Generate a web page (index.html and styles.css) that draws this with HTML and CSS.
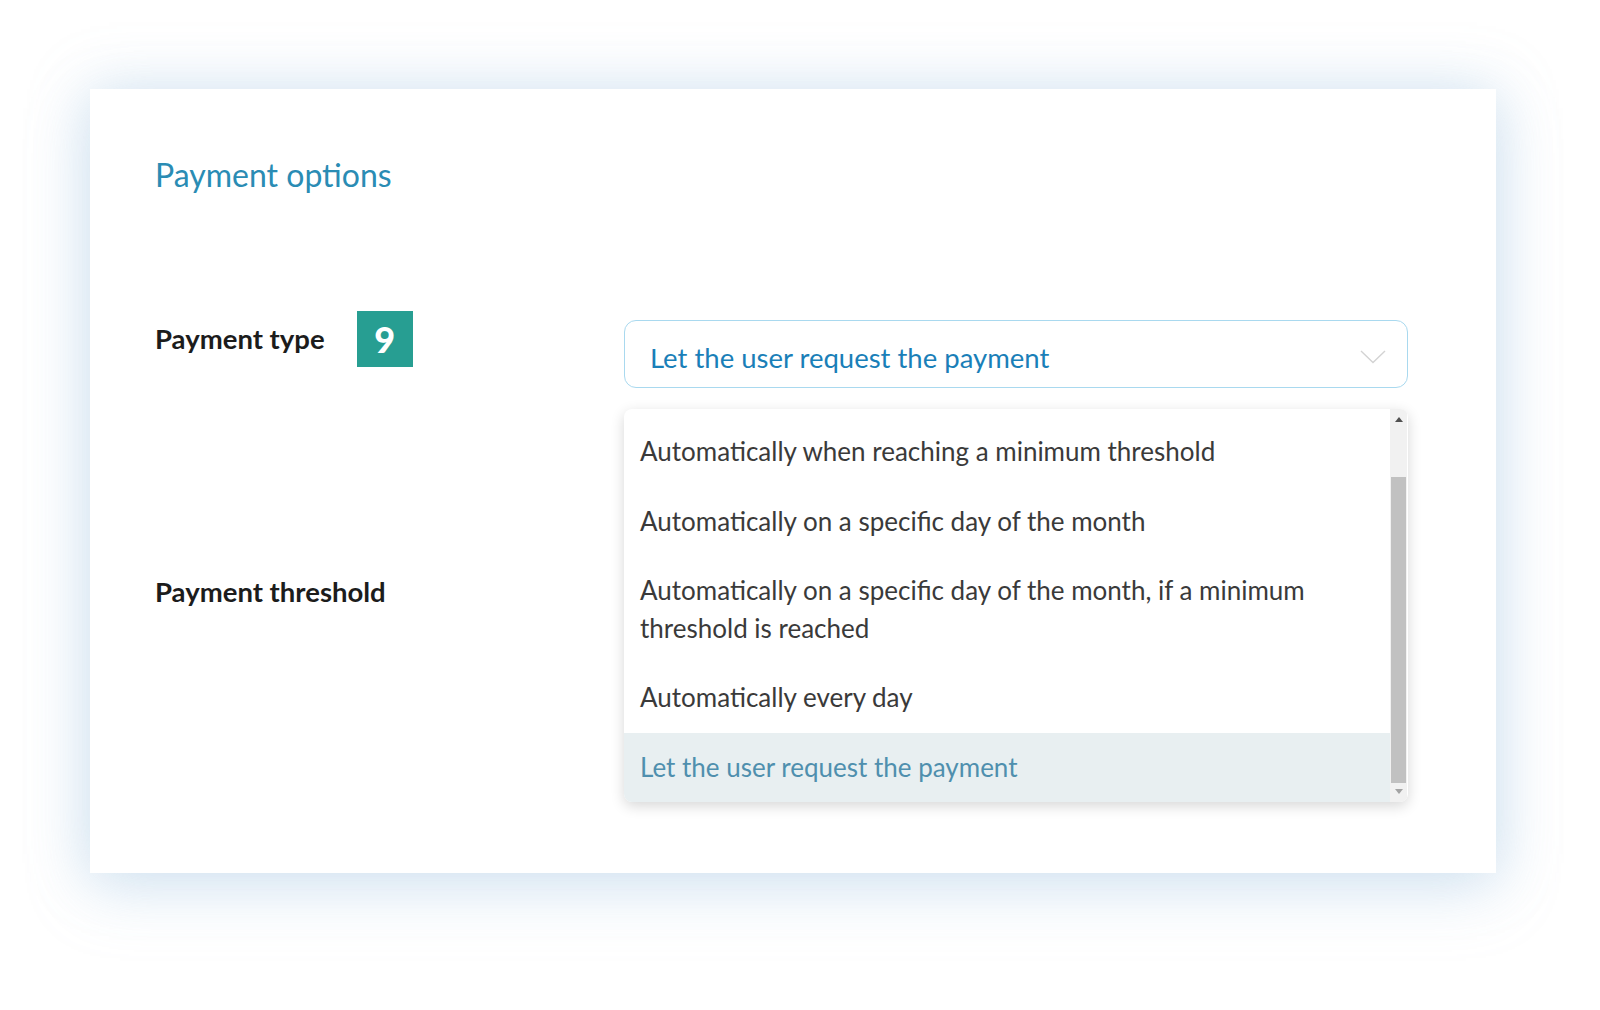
FILE: index.html
```html
<!DOCTYPE html>
<html lang="en">
<head>
  <meta charset="UTF-8" />
  <meta name="viewport" content="width=device-width, initial-scale=1.0" />
  <title>Payment options</title>
  <link rel="stylesheet" href="styles.css">
</head>
<body>
  <!-- Payment settings card -->
  <div class="card">
    <h2 class="card-title">Payment options</h2>

    <div class="form-row">
      <div class="label-cell">
        <span class="field-label">Payment type</span>
        <span class="step-badge">9</span>
      </div>

      <!-- Select with its open option list -->
      <div class="select-wrap">
        <div class="select-box">
          <span class="select-value">Let the user request the payment</span>
          <svg class="chevron" width="26" height="14" viewBox="0 0 26 14">
            <polyline points="1,1 13,12.5 25,1" fill="none" stroke="#d3d3d3" stroke-width="1.4" />
          </svg>
        </div>

        <div class="dropdown">
          <ul class="option-list">
            <li class="option">Automatically when reaching a minimum threshold</li>
            <li class="option">Automatically on a specific day of the month</li>
            <li class="option">Automatically on a specific day of the month, if a minimum threshold is reached</li>
            <li class="option">Automatically every day</li>
            <li class="option selected">Let the user request the payment</li>
          </ul>
          <div class="scrollbar">
            <div class="scroll-track">
              <span class="arrow-up"></span>
            </div>
            <div class="scroll-thumb"></div>
            <div class="scroll-end">
              <span class="arrow-down"></span>
            </div>
          </div>
        </div>
      </div>
    </div>

    <div class="form-row threshold-row">
      <div class="label-cell">
        <span class="field-label">Payment threshold</span>
      </div>
      <div></div>
    </div>
  </div>
</body>
</html>
```

FILE: styles.css
```css
* {
  box-sizing: border-box;
}
body {
  margin: 0;
  padding-bottom: 137px;
  background-color: #ffffff;
  font-family: Lato, "Open Sans", sans-serif;
}
.card {
  width: 1406px;
  height: 784px;
  margin: 89px 0 0 90px;
  padding: 66px 88px 0 65px;
  background: white;
  box-shadow: 0 0 55px rgba(150, 190, 222, 0.38), 0 20px 60px rgba(170, 205, 230, 0.25);
}
.card-title {
  margin: 0;
  font-size: 32px;
  line-height: 40px;
  font-weight: 400;
  color: #2a8cb4;
}
.form-row {
  display: grid;
  grid-template-columns: 469px 1fr;
  align-items: start;
  margin-top: 116px;
}
.label-cell {
  display: flex;
  align-items: center;
  gap: 32px;
  height: 56px;
}
.field-label {
  font-size: 27.5px;
  font-weight: 700;
  color: #1c1c1c;
  line-height: 32px;
}
.step-badge {
  width: 56px;
  height: 56px;
  display: flex;
  align-items: center;
  justify-content: center;
  background-color: #279e92;
  color: white;
  font-size: 36px;
  font-weight: 900;
}
.select-wrap {
  position: relative;
  margin-top: 9px;
}
.select-box {
  height: 68px;
  display: flex;
  align-items: center;
  justify-content: space-between;
  padding: 6px 21px 0 25px;
  border: 1px solid #a9d9ef;
  border-radius: 12px;
}
.select-value {
  font-size: 27.5px;
  color: #1a7fb8;
}
.chevron {
  margin-top: 0;
}
.dropdown {
  position: absolute;
  top: calc(100% + 21px);
  left: 0;
  right: 0;
  display: flex;
  background: white;
  border-radius: 8px;
  box-shadow: 0 4px 14px rgba(0, 0, 0, 0.16);
  overflow: hidden;
}
.option-list {
  flex: 1;
  list-style: none;
  margin: 0;
  padding: 8px 0 0 0;
}
.option {
  padding: 16px 16px;
  font-size: 26px;
  line-height: 37.5px;
  color: #3a3a3a;
}
.option.selected {
  background-color: #e8eff1;
  color: #4f8fae;
}
.scrollbar {
  width: 17px;
  margin-right: 1px;
  display: flex;
  flex-direction: column;
  background-color: #f1f1f1;
}
.scroll-track {
  height: 68px;
  display: flex;
  justify-content: center;
  padding-top: 8px;
}
.scroll-thumb {
  flex: 1;
  background-color: #c1c1c1;
  margin: 0 1px;
}
.scroll-end {
  height: 19px;
  display: flex;
  justify-content: center;
  padding-top: 6px;
}
.arrow-up {
  width: 0;
  height: 0;
  border-left: 4px solid transparent;
  border-right: 4px solid transparent;
  border-bottom: 5px solid #505050;
}
.arrow-down {
  width: 0;
  height: 0;
  border-left: 4px solid transparent;
  border-right: 4px solid transparent;
  border-top: 5px solid #a3a3a3;
}
.threshold-row {
  margin-top: 176px;
}
```
